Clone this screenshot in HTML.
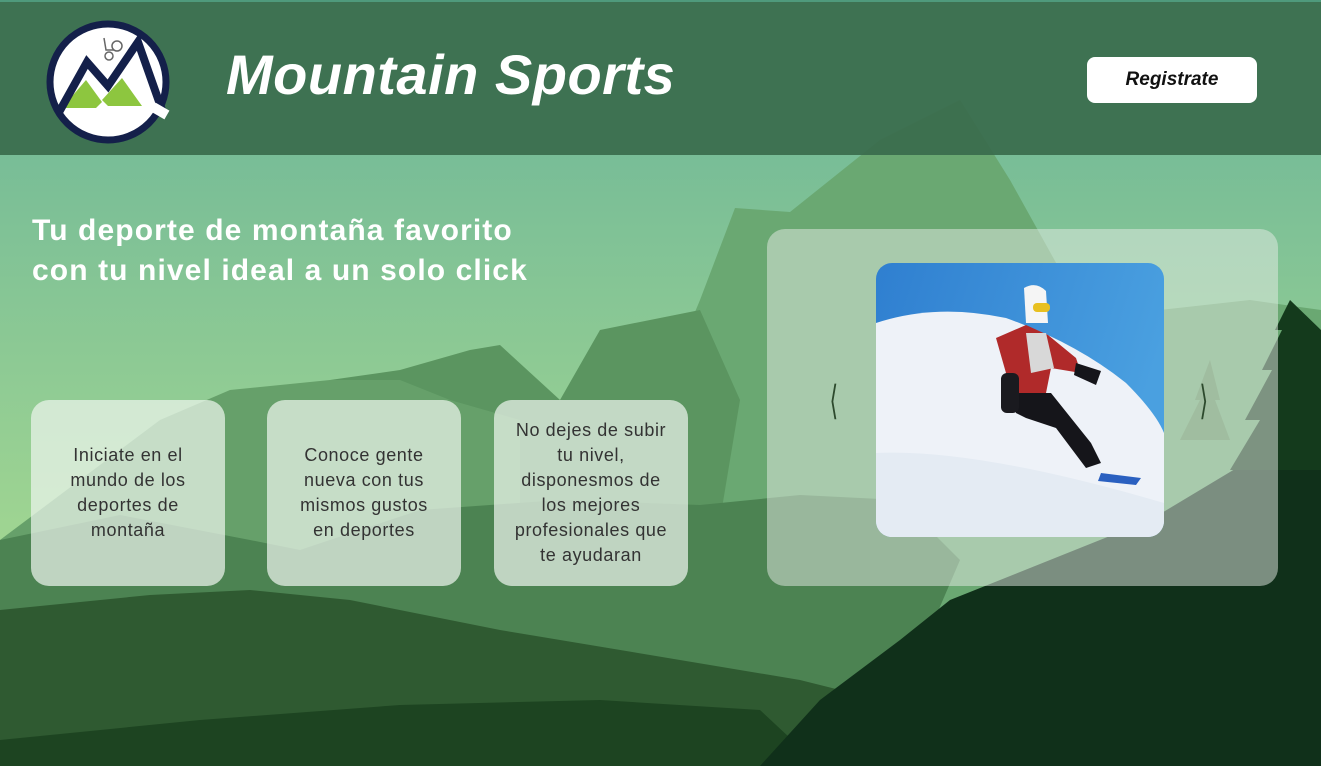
<!DOCTYPE html>
<html><head><meta charset="utf-8"><style>
*{margin:0;padding:0;box-sizing:border-box}
body{width:1321px;height:766px;overflow:hidden;position:relative;font-family:"Liberation Sans",sans-serif;background:#7cbf96}
#bg{position:absolute;left:0;top:0}
header{position:absolute;left:0;top:0;width:1321px;height:155px;background:rgba(58,108,76,0.93);border-top:2px solid #4f9a7c}
.title{position:absolute;left:226px;top:40px;font-size:56px;font-weight:bold;font-style:italic;color:#fff;letter-spacing:0.5px}
.btn{position:absolute;left:1087px;top:55px;width:170px;height:46px;background:#fff;border-radius:8px;text-align:center;line-height:46px;font-weight:bold;font-style:italic;font-size:19px;color:#111}
h1{position:absolute;left:32px;top:211px;font-size:30px;line-height:40px;color:#fff;font-weight:bold;letter-spacing:1.1px}
.card{position:absolute;top:400px;width:194px;height:186px;background:rgba(235,244,235,0.72);border-radius:18px;display:flex;align-items:center;justify-content:center;text-align:center;font-size:18px;line-height:25px;color:#333;padding:0 4px;letter-spacing:0.6px;white-space:nowrap}
.car{position:absolute;left:767px;top:229px;width:511px;height:357px;background:rgba(230,235,230,0.5);border-radius:18px}
.img{position:absolute;left:876px;top:263px;width:288px;height:274px;border-radius:16px;overflow:hidden}
.arr{position:absolute;top:378px;color:#2d4a2d;font-size:40px;font-weight:100;transform:scaleX(0.55)}
</style></head><body>
<svg id="bg" width="1321" height="766" viewBox="0 0 1321 766">
<defs><linearGradient id="sky" x1="0" y1="0" x2="0" y2="1"><stop offset="0.2" stop-color="#78bd97"/><stop offset="0.75" stop-color="#a3d791"/></linearGradient></defs>
<rect width="1321" height="766" fill="url(#sky)"/>
<polygon fill="#6aa872" points="560,560 650,420 700,300 735,208 790,212 880,140 960,100 1010,180 1060,270 1160,310 1250,300 1321,310 1321,766 560,766"/>
<polygon fill="#5b9560" points="240,430 330,380 400,370 470,350 500,345 560,400 600,330 700,310 740,400 720,520 600,560 240,560"/>
<polygon fill="#66a06a" points="0,540 160,420 230,390 330,380 400,380 450,400 520,420 520,560 0,560"/>
<polygon fill="#4c8352" points="0,540 120,515 250,540 300,550 420,510 560,500 700,505 800,495 900,500 960,560 900,700 0,700"/>
<polygon fill="#2f5a31" points="0,610 150,595 250,590 350,600 500,630 650,655 800,680 880,700 880,766 0,766"/>
<polygon fill="#1d4421" points="0,766 0,740 200,720 400,705 600,700 760,710 820,766"/>
<polygon fill="#10301a" points="760,766 820,700 900,640 950,600 1050,560 1150,520 1250,460 1321,430 1321,766"/>
<polygon fill="#143a1c" points="1290,300 1275,330 1282,330 1262,370 1272,370 1245,420 1260,420 1230,470 1321,470 1321,330"/>
<polygon fill="#5a8e5a" points="1210,360 1195,400 1200,400 1180,440 1230,440 1215,400 1220,400"/>
</svg>
<header>
<svg style="position:absolute;left:44px;top:16px" width="128" height="128" viewBox="0 0 128 128">
<circle cx="64" cy="64" r="58" fill="#fff" stroke="#14204a" stroke-width="7"/>
<polygon points="18,90 42,62 58,84 52,90" fill="#8dc63f"/>
<polygon points="58,82 78,60 98,88 64,88" fill="#8dc63f"/>
<polyline points="14,96 43,44 64,68 94,24 118,92" fill="none" stroke="#14204a" stroke-width="8"/>
<rect x="108" y="88" width="16" height="10" fill="#fff" transform="rotate(30 116 93)"/>
<circle cx="73" cy="28" r="5" fill="none" stroke="#666" stroke-width="1.5"/>
<circle cx="65" cy="38" r="4" fill="none" stroke="#666" stroke-width="1.5"/>
<path d="M60,20 L62,32 L70,32" fill="none" stroke="#666" stroke-width="1.5"/>
</svg>
<div class="title">Mountain Sports</div>
<div class="btn">Registrate</div>
</header>
<h1>Tu deporte de montaña favorito<br>con tu nivel ideal a un solo click</h1>
<div class="card" style="left:31px">Iniciate en el<br>mundo de los<br>deportes de<br>montaña</div>
<div class="card" style="left:267px">Conoce gente<br>nueva con tus<br>mismos gustos<br>en deportes</div>
<div class="card" style="left:494px">No dejes de subir<br>tu nivel,<br>disponesmos de<br>los mejores<br>profesionales que<br>te ayudaran</div>
<div class="car"></div>
<div class="img">
<svg width="288" height="274" viewBox="0 0 288 274">
<defs><linearGradient id="s2" x1="0" y1="0" x2="1" y2="0.3"><stop offset="0" stop-color="#2f7fd0"/><stop offset="1" stop-color="#4aa0e0"/></linearGradient></defs>
<rect width="288" height="274" fill="url(#s2)"/>
<path d="M0,60 Q60,40 130,55 Q200,80 250,120 Q280,150 288,170 L288,274 L0,274Z" fill="#eef2f8"/>
<path d="M0,190 Q100,185 288,240 L288,274 L0,274Z" fill="#e4ebf3"/>
<path d="M148,25 Q160,18 170,28 L172,60 L150,60Z" fill="#f5f5f5"/>
<rect x="157" y="40" width="17" height="9" rx="4" fill="#e8c020"/>
<path d="M120,75 L150,62 L172,72 L200,95 L205,110 L175,105 L170,130 L140,135 L130,110Z" fill="#b02a2a"/>
<path d="M150,70 L170,70 L178,105 L155,110Z" fill="#d8d8d8"/>
<path d="M200,100 L225,108 L220,122 L198,112Z" fill="#15151a"/>
<path d="M140,130 L175,130 L215,180 L225,200 L210,205 L180,165 L150,155 L140,150Z" fill="#15151a"/>
<rect x="125" y="110" width="18" height="40" rx="6" fill="#1a1a1f"/>
<path d="M225,210 L265,215 L260,222 L222,218Z" fill="#2a60c0"/>
</svg>
</div>
<div class="arr" style="left:826px">&#10216;</div>
<div class="arr" style="left:1196px">&#10217;</div>
</body></html>
